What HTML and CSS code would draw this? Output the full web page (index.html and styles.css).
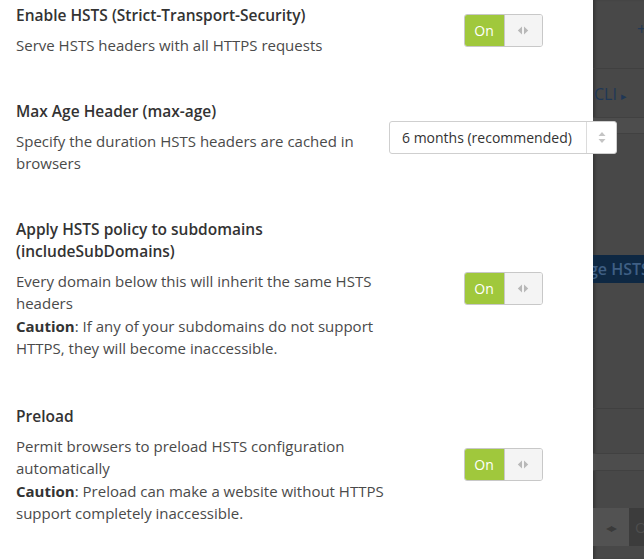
FILE: index.html
```html
<!DOCTYPE html>
<html>
<head>
<meta charset="utf-8">
<link rel="stylesheet" href="styles.css">
</head>
<body>
<div class="screen">
  <div class="drawer">
    <div class="setting">
      <div class="text">
        <div class="title">Enable HSTS (Strict-Transport-Security)</div>
        <div class="desc">Serve HSTS headers with all HTTPS requests</div>
      </div>
      <div class="control">
        <div class="toggle"><span class="on">On</span><span class="knob"><svg width="12" height="9" viewBox="0 0 12 9"><path d="M5 0.5 L0.8 4.5 L5 8.5Z M7 0.5 L11.2 4.5 L7 8.5Z" fill="#b8b8b8"/></svg></span></div>
      </div>
    </div>
    <div class="setting">
      <div class="text">
        <div class="title">Max Age Header (max-age)</div>
        <div class="desc">Specify the duration HSTS headers are cached in browsers</div>
      </div>
      <div class="control">
        <div class="select"><span class="value">6 months (recommended)</span><span class="arrows"><svg width="8" height="13" viewBox="0 0 8 13"><path d="M4 1 L7.5 5 L0.5 5Z M4 12 L7.5 8 L0.5 8Z" fill="#c4c4c4"/></svg></span></div>
      </div>
    </div>
    <div class="setting">
      <div class="text">
        <div class="title">Apply HSTS policy to subdomains (includeSubDomains)</div>
        <div class="desc">Every domain below this will inherit the same HSTS headers<br><b>Caution</b>: If any of your subdomains do not support HTTPS, they will become inaccessible.</div>
      </div>
      <div class="control">
        <div class="toggle"><span class="on">On</span><span class="knob"><svg width="12" height="9" viewBox="0 0 12 9"><path d="M5 0.5 L0.8 4.5 L5 8.5Z M7 0.5 L11.2 4.5 L7 8.5Z" fill="#b8b8b8"/></svg></span></div>
      </div>
    </div>
    <div class="setting last">
      <div class="text">
        <div class="title">Preload</div>
        <div class="desc">Permit browsers to preload HSTS configuration automatically<br><b>Caution</b>: Preload can make a website without HTTPS support completely inaccessible.</div>
      </div>
      <div class="control">
        <div class="toggle"><span class="on">On</span><span class="knob"><svg width="12" height="9" viewBox="0 0 12 9"><path d="M5 0.5 L0.8 4.5 L5 8.5Z M7 0.5 L11.2 4.5 L7 8.5Z" fill="#b8b8b8"/></svg></span></div>
      </div>
    </div>
  </div>
  <div class="backdrop">
    <div class="bd-plus">+</div>
    <div class="bd-line bd-l1"></div>
    <div class="bd-cli">CLI <span class="tri">&#9656;</span></div>
    <div class="bd-band bd-b1"></div>
    <div class="bd-banner">ge HSTS</div>
    <div class="bd-line bd-l2"></div>
    <div class="bd-band bd-b2"></div>
    <div class="bd-toggle"><span class="bd-knob">&#9666;&#9656;</span><span class="bd-on">O</span></div>
  </div>
</div>
</body>
</html>
```
FILE: styles.css
```css
html, body {
  margin: 0;
  padding: 0;
}
body {
  background: #484848;
  font-family: "Open Sans", "Liberation Sans", sans-serif;
  font-size: 15px;
  color: #4a4a4a;
}
.screen {
  display: flex;
  width: 644px;
  height: 559px;
  overflow: hidden;
}
.drawer {
  width: 593px;
  flex: none;
  background: #fff;
  position: relative;
  z-index: 2;
  padding-top: 4px;
  display: flex;
  flex-direction: column;
  gap: 43px;
}
.setting {
  display: flex;
  align-items: center;
  width: 617px;
}
.setting.last {
  margin-top: 2px;
}
.text {
  width: 389px;
  flex: none;
  padding-left: 16px;
  box-sizing: border-box;
  padding-right: 4px;
}
.title {
  font-weight: 600;
  font-size: 15.5px;
  color: #333;
  line-height: 22px;
  margin-bottom: 8px;
}
.desc {
  line-height: 22.5px;
  color: #4a4a4a;
}
.desc b {
  font-weight: 700;
  color: #333;
}
.control {
  width: 228px;
  flex: none;
  display: flex;
  justify-content: center;
}
.toggle {
  display: flex;
  width: 79px;
  height: 33px;
  box-sizing: border-box;
  border: 1px solid #c8c8c8;
  border-radius: 3px;
  overflow: hidden;
}
.toggle .on {
  width: 39px;
  background: #a0c83c;
  color: #fff;
  font-size: 14px;
  display: flex;
  align-items: center;
  justify-content: center;
}
.toggle .knob {
  flex: 1;
  background: #f4f4f4;
  border-left: 1px solid #c8c8c8;
  display: flex;
  align-items: center;
  justify-content: center;
}
.select {
  display: flex;
  width: 228px;
  height: 33px;
  box-sizing: border-box;
  border: 1px solid #cfcfcf;
  border-radius: 3px;
  background: #fff;
}
.select .value {
  flex: 1;
  color: #333;
  font-size: 14px;
  padding-left: 12px;
  display: flex;
  align-items: center;
}
.select .arrows {
  width: 29px;
  border-left: 1px solid #dcdcdc;
  display: flex;
  align-items: center;
  justify-content: center;
}
.backdrop {
  flex: 1;
  position: relative;
  box-shadow: inset 3px 0 3px -1px rgba(0,0,0,0.25);
  color: #1d3552;
}
.bd-plus {
  position: absolute;
  left: 44px;
  top: 18px;
  font-size: 16px;
  color: #233a55;
}
.bd-line {
  position: absolute;
  left: 0;
  right: 0;
  height: 1px;
  background: #404040;
}
.bd-l1 { top: 68px; }
.bd-l2 { top: 408px; }
.bd-cli {
  position: absolute;
  left: 1px;
  top: 83px;
  font-size: 16px;
  color: #1f3756;
  white-space: nowrap;
}
.bd-cli .tri { font-size: 11px; }
.bd-band {
  position: absolute;
  left: 0;
  right: 0;
  background: #4d4d4d;
  border-top: 1px solid #414141;
  border-bottom: 1px solid #414141;
}
.bd-b1 { top: 117px; height: 15px; }
.bd-b2 { top: 453px; height: 16px; }
.bd-banner {
  position: absolute;
  left: 0;
  right: 0;
  top: 255px;
  height: 28px;
  background: #0e2843;
  color: #3f5f84;
  font-size: 16px;
  font-weight: 600;
  line-height: 28px;
  white-space: nowrap;
  overflow: hidden;
  text-indent: -4px;
}
.bd-toggle {
  position: absolute;
  left: 0;
  top: 508px;
  height: 38px;
  display: flex;
  white-space: nowrap;
}
.bd-knob {
  width: 36px;
  background: #525252;
  color: #3a3a3a;
  font-size: 12px;
  display: flex;
  align-items: center;
  justify-content: center;
  letter-spacing: -1px;
}
.bd-on {
  width: 20px;
  background: #3c3c3c;
  color: #4e4e4e;
  font-size: 15px;
  line-height: 38px;
  padding-left: 6px;
}
```
